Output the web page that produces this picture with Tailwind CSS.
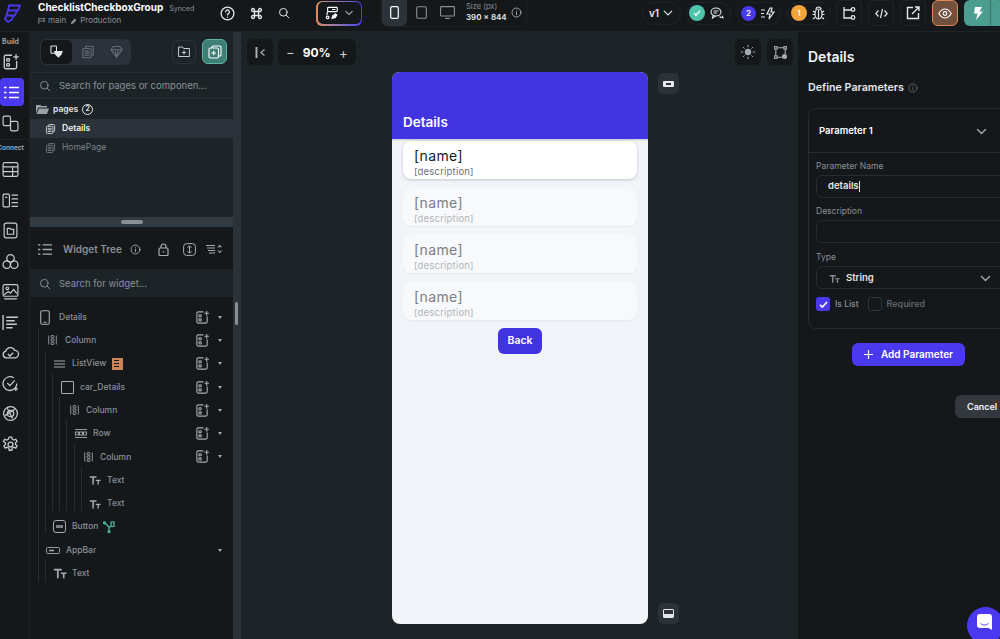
<!DOCTYPE html>
<html lang="en">
<head>
  <meta charset="UTF-8">
  <title>FlutterFlow - Details</title>
  <script src="https://cdn.jsdelivr.net/npm/@tailwindcss/browser@4"></script>
</head>
<body class="bg-[#14181b]">
<svg class="hidden" width="0" height="0">
  <symbol id="add" viewBox="0 0 16 16" fill="none" stroke="currentColor" stroke-width="1.2"><path d="M9 2H3.500A1.500 1.500 0 0 0 2 3.500v9A1.500 1.500 0 0 0 3.500 14h8a1.500 1.500 0 0 0 1.500-1.500V7"/><rect x="4.200" y="5" width="2.400" height="2.200" rx=".6"/><rect x="4.200" y="9.500" width="2.400" height="2.200" rx=".6"/><path d="M12.500 1v5M10 3.500h5"/></symbol>
  <symbol id="col" viewBox="0 0 16 16" fill="none" stroke="currentColor" stroke-width="1.2"><path d="M2.500 1.500v13M13.500 1.500v13"/><rect x="6" y="1.500" width="4" height="3.400" rx=".8"/><rect x="6" y="6.300" width="4" height="3.400" rx=".8"/><rect x="6" y="11.100" width="4" height="3.400" rx=".8"/></symbol>
  <symbol id="tt" viewBox="0 0 16 16" fill="currentColor"><path d="M1 3h9v2H6.500v9h-2V5H1zM9 7.500h6.500v1.700h-2.300V14h-1.900V9.200H9z"/></symbol>
  <symbol id="page" viewBox="0 0 16 16" fill="none" stroke="currentColor" stroke-width="1.200"><rect x="2" y="4" width="9.500" height="10.500" rx="1.500"/><path d="M5 4V2.800A1.300 1.300 0 0 1 6.300 1.500h6.200A1.500 1.500 0 0 1 14 3v7.500a1.300 1.300 0 0 1-1.300 1.300h-1.200M4 7h5.500M4 9.300h5.500M4 11.600h5.500"/></symbol>
  <symbol id="chev" viewBox="0 0 16 16" fill="none" stroke="currentColor" stroke-width="1.600" stroke-linecap="round" stroke-linejoin="round"><path d="M3 5.500l5 5 5-5"/></symbol>
  <symbol id="search" viewBox="0 0 16 16" fill="none" stroke="currentColor" stroke-width="1.300" stroke-linecap="round"><circle cx="7" cy="7" r="5"/><path d="M10.800 10.800L14.500 14.500"/></symbol>
  <symbol id="info" viewBox="0 0 16 16" fill="none" stroke="currentColor" stroke-width="1.300" stroke-linecap="round"><circle cx="8" cy="8" r="6.500"/><path d="M8 7.300V11.300M8 4.700v.2"/></symbol>
</svg>

<div class="w-[1000px] h-[639px] overflow-hidden relative flex flex-col text-[#e5e7eb] [font-family:Inter,'Liberation_Sans',sans-serif]">

  <!-- top bar -->
  <header class="h-[32px] shrink-0 flex items-center bg-[#14181b] border-b border-[#1d2428] pb-[5px]">
    <div class="w-[30px] shrink-0 pl-[3px]">
      <svg class="w-[18px] h-[19px] text-[#4b39ef]" viewBox="0 0 18 19" fill="none" stroke="currentColor" stroke-width="1.800" stroke-linejoin="round"><path d="M6 1.500h11l-2 5H5zM5 6.500h9l-2 5H3.500zM3.500 11.500L2 15l3 3 4-2.500 1.500-4"/></svg>
    </div>
    <div class="w-[8px] shrink-0"></div>
    <div class="w-[170px] shrink-0 mt-[1px]">
      <div class="flex items-baseline gap-[6px]"><span class="text-[10px] font-bold text-white leading-[13px]">ChecklistCheckboxGroup</span><span class="text-[7px] text-[#8a9097]">Synced</span></div>
      <div class="flex items-center gap-[2px] text-[8px] text-[#8a9097] leading-[11px] mt-[1px]">
        <svg class="w-[8px] h-[8px]" viewBox="0 0 10 10" fill="none" stroke="currentColor"><path d="M1 1v8M1 5h5M1 2h5"/><circle cx="7.500" cy="2" r="1"/><circle cx="7.500" cy="5" r="1"/></svg>
        <span>main</span>
        <svg class="w-[8px] h-[8px] ml-[2px]" viewBox="0 0 10 10" fill="currentColor"><path d="M1 9l1-3 4-4 2 2-4 4z"/></svg>
        <span>Production</span>
      </div>
    </div>
    <div class="flex shrink-0 items-center gap-[15px] w-[105px] pl-[12px]">
      <svg class="w-[15px] h-[15px] text-[#e5e7eb]" viewBox="0 0 16 16" fill="none" stroke="currentColor" stroke-width="1.400" stroke-linecap="round"><circle cx="8" cy="8" r="6.800"/><path d="M6 6.200a2 2 0 1 1 3 1.800c-.7.4-1 .8-1 1.500M8 11.800v.2"/></svg>
      <svg class="w-[13px] h-[13px] text-[#e5e7eb]" viewBox="0 0 16 16" fill="none" stroke="currentColor" stroke-width="1.700"><path d="M5.500 5.500h5v5h-5zM5.500 5.500H3.800a1.800 1.800 0 1 1 1.700-1.700zM10.500 5.500V3.800a1.800 1.800 0 1 1 1.700 1.700zM10.500 10.500h1.700a1.800 1.800 0 1 1-1.700 1.700zM5.500 10.500v1.700a1.800 1.800 0 1 1-1.700-1.700z"/></svg>
      <svg class="w-[12px] h-[12px] text-[#e5e7eb]"><use href="#search"/></svg>
    </div>
    <div class="ml-[3px] shrink-0 w-[46px] h-[25px] rounded-[6px] p-[1.500px] bg-gradient-to-r from-[#e08a5b] to-[#4b39ef]">
      <div class="w-full h-full rounded-[5px] bg-[#14181b] flex items-center justify-center gap-[5px] text-white">
        <svg class="w-[14px] h-[14px]" viewBox="0 0 16 16" fill="none" stroke="currentColor" stroke-width="1.300"><rect x="3" y="1.500" width="11" height="5" rx="1"/><path d="M3 6.500l-1 4M8 4h4"/><circle cx="3" cy="13" r="1.500"/><path d="M8 14l1-3 3-2 1.500 1.500-2 3z" fill="currentColor"/></svg>
        <svg class="w-[10px] h-[10px]"><use href="#chev"/></svg>
      </div>
    </div>
    <div class="ml-[19px] shrink-0 h-[28px] -mt-[1px] w-[146px] flex items-center rounded-b-[8px] border-b border-x border-[#1d2428]">
      <div class="w-[25px] h-[27px] bg-[#2b323a] rounded-b-[6px] flex items-center justify-center">
        <svg class="w-[9px] h-[13px] text-white" viewBox="0 0 9 13" fill="none" stroke="currentColor" stroke-width="1.200"><rect x=".7" y=".7" width="7.600" height="11.600" rx="1.400"/></svg>
      </div>
      <svg class="w-[11px] h-[13px] ml-[9px] text-[#8a9097]" viewBox="0 0 11 13" fill="none" stroke="currentColor" stroke-width="1.100"><rect x=".7" y=".7" width="9.600" height="11.600" rx="1.400"/></svg>
      <svg class="w-[15px] h-[13px] ml-[13px] text-[#8a9097]" viewBox="0 0 15 13" fill="none" stroke="currentColor" stroke-width="1.100"><rect x=".6" y=".6" width="13.800" height="9.400" rx=".8"/><path d="M5 12.400h5"/></svg>
      <div class="ml-[11px] w-[44px]">
        <div class="text-[7.500px] leading-[9px] text-[#8a9097]">Size (px)</div>
        <div class="text-[8px] font-semibold leading-[12px] text-[#e5e7eb] whitespace-nowrap">390 × 844</div>
      </div>
      <svg class="w-[11px] h-[11px] ml-[1px] text-[#a5abb2]"><use href="#info"/></svg>
    </div>

    <div class="ml-[115px] shrink-0 flex items-center">
      <div class="w-[39px] h-[23px] rounded-full border border-[#1d2428] flex items-center justify-center gap-[3px] text-[10px] font-semibold text-[#e5e7eb]">v1<svg class="w-[12px] h-[12px]"><use href="#chev"/></svg></div>
      <div class="ml-[5px] w-[45px] h-[23px] rounded-full border border-[#1d2428] flex items-center gap-[5px] pl-[2px]">
        <span class="w-[16px] h-[16px] rounded-full bg-[#4fc4ac] flex items-center justify-center"><svg class="w-[10px] h-[10px] text-white" viewBox="0 0 10 10" fill="none" stroke="currentColor" stroke-width="1.300"><path d="M2 5.200l2 2 4-4.400"/></svg></span>
        <svg class="w-[14px] h-[13px] text-[#e5e7eb]" viewBox="0 0 14 13" fill="none" stroke="currentColor" stroke-width="1.100"><ellipse cx="6" cy="5" rx="5" ry="4"/><path d="M3 8.500L2.500 11 5.500 9M9.500 9.800c1 .6 2 .6 3.500.9l-.7-2M3.500 4h5M3.500 6h3.500"/></svg>
      </div>
      <div class="ml-[6px] w-[44px] h-[23px] rounded-full border border-[#1d2428] flex items-center gap-[4px] pl-[3px]">
        <span class="w-[15px] h-[15px] rounded-full bg-[#4b39ef] text-[8px] font-semibold text-white flex items-center justify-center">2</span>
        <svg class="w-[15px] h-[13px] text-[#e5e7eb]" viewBox="0 0 15 13" fill="none" stroke="currentColor" stroke-width="1.200"><path d="M1 3h4M1 6.500h3M1 10h4M10 1L7 7h3l-1 5 5-7h-3l1-4z"/></svg>
      </div>
      <div class="ml-[6px] w-[44px] h-[23px] rounded-full border border-[#1d2428] flex items-center gap-[5px] pl-[3px]">
        <span class="w-[16px] h-[16px] rounded-full bg-[#f1a33c] text-[8px] font-semibold text-white flex items-center justify-center">1</span>
        <svg class="w-[13px] h-[14px] text-[#e5e7eb]" viewBox="0 0 13 14" fill="none" stroke="currentColor" stroke-width="1.200"><ellipse cx="6.500" cy="8" rx="3.500" ry="5"/><path d="M4 3.500a2.500 2.500 0 0 1 5 0M6.500 4v9M1 5l2 1.500M12 5l-2 1.500M.5 8.500H3M12.500 8.500H10M1 13l2-1.500M12 13l-2-1.500"/></svg>
      </div>
      <div class="ml-[5px] w-[26px] h-[26px] rounded-[6px] border border-[#1d2428] flex items-center justify-center">
        <svg class="w-[14px] h-[14px] text-[#e5e7eb]" viewBox="0 0 14 14" fill="none" stroke="currentColor" stroke-width="1.300"><path d="M2 1v11h7M2 4h7"/><circle cx="11" cy="3.500" r="1.800"/><circle cx="11" cy="11.500" r="1.800"/></svg>
      </div>
      <div class="ml-[6px] w-[26px] h-[26px] rounded-[6px] border border-[#1d2428] flex items-center justify-center">
        <svg class="w-[13px] h-[11px] text-[#e5e7eb]" viewBox="0 0 13 11" fill="none" stroke="currentColor" stroke-width="1.200"><path d="M3.500 2.500L.8 5.500l2.700 3M9.500 2.500l2.700 3-2.700 3M7.500 1L5.500 10"/></svg>
      </div>
      <div class="ml-[6px] w-[26px] h-[26px] rounded-[6px] border border-[#1d2428] flex items-center justify-center">
        <svg class="w-[14px] h-[14px] text-[#e5e7eb]" viewBox="0 0 14 14" fill="none" stroke="currentColor" stroke-width="1.400"><path d="M7 1.500H1.500v11h11V7M6 8l7-7M9 1h4v4"/></svg>
      </div>
      <div class="ml-[6px] w-[26px] h-[26px] rounded-[6px] border border-[#e08a5b] bg-[#71503c] flex items-center justify-center">
        <svg class="w-[14px] h-[11px] text-white" viewBox="0 0 14 11" fill="none" stroke="currentColor" stroke-width="1.200"><path d="M.8 5.500C3 1.800 5 1 7 1s4 .8 6.200 4.500C11 9.200 9 10 7 10S3 9.200.8 5.500z"/><circle cx="7" cy="5.500" r="1.800"/></svg>
      </div>
      <div class="ml-[6px] w-[40px] h-[26px] rounded-[6px] bg-[#4b9e8f] flex items-center pl-[9px]">
        <svg class="w-[10px] h-[13px] text-white" viewBox="0 0 10 13" fill="currentColor"><path d="M2 0h7L6.500 4.500H10L3 13l1.500-6.500H1z"/></svg>
        <i class="block w-px h-[26px] bg-[#14181b]/30 ml-[7px]"></i>
      </div>
    </div>
  </header>

  <div class="flex-1 flex min-h-0">
    <!-- icon rail -->
    <nav class="w-[30px] shrink-0 bg-[#14181b] border-r border-[#1d2428] flex flex-col items-center text-[#c8ccd1] pr-[8px]">
      <div class="text-[7px] font-semibold text-[#a5abb2] leading-[9px] mt-[5px]">Build</div>
      <svg class="w-[18px] h-[18px] mt-[7px]"><use href="#add"/></svg>
      <div class="w-[24px] h-[28px] bg-[#4b39ef] rounded-[4px] mt-[7px] ml-[2px] flex items-center justify-center text-white">
        <svg class="w-[15px] h-[13px]" viewBox="0 0 15 13" fill="none" stroke="currentColor" stroke-width="1.600"><path d="M5 1.500h10M5 6.500h10M5 11.500h10M0 1.500h2.500M0 6.500h2.500M0 11.500h2.500"/></svg>
      </div>
      <svg class="w-[17px] h-[17px] mt-[9px]" viewBox="0 0 16 16" fill="none" stroke="currentColor" stroke-width="1.100"><rect x="1" y="1" width="7" height="9" rx="1.500"/><rect x="8" y="6" width="7" height="9" rx="1.500"/></svg>
      <div class="w-[30px] h-px bg-[#1d2428] mt-[7px] ml-[8px]"></div>
      <div class="text-[6.500px] font-semibold text-[#a5abb2] leading-[9px] mt-[4px] whitespace-nowrap">Connect</div>
      <div class="flex flex-col items-center gap-[13.500px] mt-[8px]">
        <svg class="w-[17px] h-[17px]" viewBox="0 0 16 16" fill="none" stroke="currentColor" stroke-width="1.100"><rect x="1" y="1.500" width="14" height="13" rx="1.500"/><path d="M1 5.500h14M1 10h14M10 5.500V14.500"/></svg>
        <svg class="w-[17px] h-[17px]" viewBox="0 0 16 16" fill="none" stroke="currentColor" stroke-width="1.100"><rect x="1" y="2" width="6" height="12" rx="1"/><path d="M9 3h6M9 6.500h6M9 10h6M9 13.500h6M3 5h2"/></svg>
        <svg class="w-[17px] h-[17px]" viewBox="0 0 16 16" fill="none" stroke="currentColor" stroke-width="1.100"><rect x="2" y="1" width="12" height="14" rx="2"/><path d="M5 6h2.500l1 1H11v4.500H5z"/></svg>
        <svg class="w-[17px] h-[17px]" viewBox="0 0 16 16" fill="none" stroke="currentColor" stroke-width="1.200"><circle cx="8" cy="5" r="3.500"/><circle cx="4.500" cy="11" r="3.500"/><circle cx="11.500" cy="11" r="3.500"/></svg>
        <svg class="w-[17px] h-[17px]" viewBox="0 0 16 16" fill="none" stroke="currentColor" stroke-width="1.100"><rect x="1" y="1.500" width="14" height="11" rx="1.500"/><circle cx="5" cy="5" r="1.200"/><path d="M2 11l4-3 2 1.500L11 6l3 4M2 15h12"/></svg>
        <svg class="w-[17px] h-[17px]" viewBox="0 0 16 16" fill="none" stroke="currentColor" stroke-width="1.300"><path d="M1 1v14M4 3h11M4 6.300h8M4 9.600h10M4 13h6"/></svg>
        <svg class="w-[17px] h-[17px]" viewBox="0 0 16 16" fill="none" stroke="currentColor" stroke-width="1.200"><path d="M4 13a3.200 3.200 0 0 1-.4-6.300A4.500 4.500 0 0 1 12 6a3.500 3.500 0 0 1 0 7zM5.500 9.500l2 1.800 3-3"/></svg>
        <svg class="w-[17px] h-[17px]" viewBox="0 0 16 16" fill="none" stroke="currentColor" stroke-width="1.200"><path d="M14 8a6.500 6.500 0 1 1-3-5.400M5 7.500l2.500 2.500L12 5M13 11v4M11 13h4"/></svg>
        <svg class="w-[17px] h-[17px]" viewBox="0 0 16 16" fill="none" stroke="currentColor" stroke-width="1.200"><circle cx="8" cy="8" r="6.500"/><circle cx="8" cy="8" r="3"/><path d="M5 3l5 10M3 10l9-6"/></svg>
        <svg class="w-[17px] h-[17px]" viewBox="0 0 16 16" fill="none" stroke="currentColor" stroke-width="1.200"><circle cx="8" cy="8" r="2.300"/><path d="M6.800 1h2.400l.4 2 1.500.8 1.900-.8 1.200 2.100-1.500 1.300v1.600l1.500 1.300-1.200 2.100-1.900-.8-1.500.8-.4 2H6.800l-.4-2-1.500-.8-1.900.8-1.200-2.100 1.500-1.300V6.400L1.300 5.100l1.200-2.100 1.900.8 1.500-.8z"/></svg>
      </div>
    </nav>

    <!-- left panel -->
    <aside class="w-[203px] shrink-0 flex flex-col bg-[#1d2428]">
      <div class="h-[41px] shrink-0 flex items-center pl-[10px] pb-[1px] border-b border-[#252c32]">
        <div class="w-[91px] h-[26px] rounded-[6px] bg-[#2b323a] flex items-center">
          <div class="w-[31px] h-[24px] ml-[1px] rounded-[5px] bg-[#14181b] flex items-center justify-center">
            <svg class="w-[13px] h-[13px] text-[#e5e7eb]" viewBox="0 0 14 14" fill="none" stroke="currentColor" stroke-width="1.100"><rect x="1" y="1" width="6" height="8" rx="1"/><path d="M5 7h8l-1 3-3 3-3-3z" fill="currentColor"/></svg>
          </div>
          <svg class="w-[14px] h-[14px] ml-[9px] text-[#666d75]"><use href="#page"/></svg>
          <svg class="w-[13px] h-[13px] ml-[15px] text-[#666d75]" viewBox="0 0 14 14" fill="none" stroke="currentColor" stroke-width="1.100"><path d="M3.500 1.500h7L13 5l-6 8-6-8zM1 5h12M5 5l2 8 2-8"/></svg>
        </div>
        <div class="ml-[41px] w-[24px] h-[24px] rounded-[6px] border border-[#2b323a] flex items-center justify-center">
          <svg class="w-[12px] h-[11px] text-[#c8ccd1]" viewBox="0 0 12 11" fill="none" stroke="currentColor" stroke-width="1"><path d="M.6 1h4l1 1.500h5.800v8H.6zM6 4.500v4M4 6.500h4"/></svg>
        </div>
        <div class="ml-[6px] w-[25px] h-[25px] rounded-[6px] border border-[#5cb5a5] bg-[#3d7f75] flex items-center justify-center">
          <svg class="w-[14px] h-[14px] text-white" viewBox="0 0 14 14" fill="none" stroke="currentColor" stroke-width="1.100"><rect x="1" y="3" width="9.500" height="10" rx="1.500"/><path d="M4 3V2a1 1 0 0 1 1-1h7a1 1 0 0 1 1 1v8a1 1 0 0 1-1 1h-1.500M5.700 5.700v4.600M3.400 8h4.600"/></svg>
        </div>
      </div>
      <div class="h-[26px] shrink-0 flex items-center pl-[9px] pt-[1px] gap-[8px] border-b border-[#252c32]">
        <svg class="w-[12px] h-[12px] text-[#8a9097]"><use href="#search"/></svg>
        <span class="text-[9.500px] text-[#8a9097]">Search for pages or componen...</span>
      </div>
      <div class="h-[20px] shrink-0 flex items-center pl-[6px] gap-[4px]">
        <svg class="w-[13px] h-[10px] text-[#9aa0a6]" viewBox="0 0 13 10" fill="currentColor"><path d="M0 1h4.500l1 1H11v1.500H2.500L0 9zM3 4.500h10L11 10H.5z"/></svg>
        <span class="text-[8.500px] font-semibold text-[#e5e7eb]">pages</span>
        <span class="w-[11px] h-[11px] rounded-full border border-[#e5e7eb] text-[7px] font-semibold flex items-center justify-center">2</span>
      </div>
      <div class="h-[19px] shrink-0 flex items-center pl-[15px] gap-[6px] bg-[#2b323a]">
        <svg class="w-[11px] h-[12px] text-[#e5e7eb]"><use href="#page"/></svg>
        <span class="text-[8.500px] font-semibold text-[#f1f4f8]">Details</span>
      </div>
      <div class="h-[19px] shrink-0 flex items-center pl-[15px] gap-[6px]">
        <svg class="w-[11px] h-[12px] text-[#7c828a]"><use href="#page"/></svg>
        <span class="text-[8.500px] text-[#7c828a]">HomePage</span>
      </div>
      <div class="flex-1"></div>
      <div class="h-[10px] shrink-0 bg-[#323a42] flex items-center justify-center">
        <div class="w-[22px] h-[4px] rounded-full bg-[#8a9097]"></div>
      </div>

      <div class="h-[42px] shrink-0 flex items-center bg-[#14181b] pl-[8px] pt-[2px] text-[#a5abb2]">
        <svg class="w-[14px] h-[13px]" viewBox="0 0 15 13" fill="none" stroke="currentColor" stroke-width="1.500"><path d="M5 1.500h10M5 6.500h10M5 11.500h10M0 1.500h2.500M0 6.500h2.500M0 11.500h2.500"/></svg>
        <span class="ml-[11px] text-[10px] font-semibold text-[#8a9097]">Widget Tree</span>
        <svg class="ml-[8px] w-[11px] h-[11px]"><use href="#info"/></svg>
        <svg class="ml-[17px] w-[11px] h-[13px]" viewBox="0 0 11 13" fill="none" stroke="currentColor" stroke-width="1.200"><rect x="1" y="5" width="9" height="7.500" rx="1"/><path d="M3 5V3.500a2.500 2.500 0 0 1 5 0V5M5.500 8v1.500"/></svg>
        <svg class="ml-[14px] w-[13px] h-[13px]" viewBox="0 0 13 13" fill="none" stroke="currentColor" stroke-width="1"><rect x=".6" y=".6" width="11.800" height="11.800" rx="3"/><path d="M6.500 3v7M4.500 4.800l2-2 2 2M4.500 8.200l2 2 2-2"/></svg>
        <svg class="ml-[10px] w-[16px] h-[10px]" viewBox="0 0 16 10" fill="none" stroke="currentColor" stroke-width="1.100"><path d="M0 1.500h9M1 4h8M2 6.500h7M3 9h6M12 3.500l1.700-2 1.700 2M12 6.500l1.700 2 1.700-2"/></svg>
      </div>
      <div class="h-[28px] shrink-0 flex items-center pl-[9px] pt-[2px] gap-[8px] bg-[#1d2428]">
        <svg class="w-[12px] h-[12px] text-[#8a9097]"><use href="#search"/></svg>
        <span class="text-[9.500px] text-[#8a9097]">Search for widget...</span>
      </div>

      <!-- widget tree -->
      <div class="h-[342px] shrink-0 bg-[#14181b] relative pt-[8.500px] text-[#8a9097] text-[8.500px] font-medium">
        <div class="absolute left-[8px] top-[31px] h-[254px] w-px bg-[#252c32]"></div>
        <div class="absolute left-[15px] top-[54px] h-[182px] w-px bg-[#252c32]"></div>
        <div class="absolute left-[22px] top-[77px] h-[137px] w-px bg-[#252c32]"></div>
        <div class="absolute left-[29px] top-[101px] h-[113px] w-px bg-[#252c32]"></div>
        <div class="absolute left-[36px] top-[124px] h-[90px] w-px bg-[#252c32]"></div>
        <div class="absolute left-[44px] top-[147px] h-[67px] w-px bg-[#252c32]"></div>
        <div class="absolute left-[51px] top-[170px] h-[44px] w-px bg-[#252c32]"></div>
        <div class="absolute left-[15px] top-[263px] h-[22px] w-px bg-[#252c32]"></div>

        <div class="h-[23.300px] flex items-center pl-[10px]">
          <svg class="w-[10px] h-[15px] text-[#a5abb2]" viewBox="0 0 10 15" fill="none" stroke="currentColor" stroke-width="1.100"><rect x=".7" y=".7" width="8.600" height="13.600" rx="1.500"/><path d="M3.500 12.300h3"/></svg>
          <span class="ml-[9px]">Details</span>
          <span class="ml-auto flex items-center gap-[8px] pr-[11px] text-[#a5abb2]"><svg class="w-[15px] h-[15px]"><use href="#add"/></svg><span class="w-0 h-0 border-x-[2.500px] border-x-transparent border-t-[3px] border-t-[#a5abb2]"></span></span>
        </div>
        <div class="h-[23.300px] flex items-center pl-[17px]">
          <svg class="w-[11px] h-[14px] text-[#a5abb2]"><use href="#col"/></svg>
          <span class="ml-[7px]">Column</span>
          <span class="ml-auto flex items-center gap-[8px] pr-[11px] text-[#a5abb2]"><svg class="w-[15px] h-[15px]"><use href="#add"/></svg><span class="w-0 h-0 border-x-[2.500px] border-x-transparent border-t-[3px] border-t-[#a5abb2]"></span></span>
        </div>
        <div class="h-[23.300px] flex items-center pl-[24px]">
          <svg class="w-[11px] h-[8px] text-[#a5abb2]" viewBox="0 0 11 8" fill="none" stroke="currentColor" stroke-width="1"><path d="M0 1h11M0 4h11M0 7h11"/></svg>
          <span class="ml-[7px]">ListView</span>
          <span class="ml-[6px] w-[11px] h-[12px] bg-[#c9845e] flex flex-col justify-center gap-[1.500px] pl-[1.500px] pr-[4px]"><i class="block h-[1.500px] bg-[#14181b]"></i><i class="block h-[1.500px] bg-[#14181b]"></i><i class="block h-[1.500px] bg-[#14181b]"></i></span>
          <span class="ml-auto flex items-center gap-[8px] pr-[11px] text-[#a5abb2]"><svg class="w-[15px] h-[15px]"><use href="#add"/></svg><span class="w-0 h-0 border-x-[2.500px] border-x-transparent border-t-[3px] border-t-[#a5abb2]"></span></span>
        </div>
        <div class="h-[23.300px] flex items-center pl-[31px]">
          <span class="w-[13px] h-[13px] border border-[#a5abb2] rounded-[1px]"></span>
          <span class="ml-[6px]">car_Details</span>
          <span class="ml-auto flex items-center gap-[8px] pr-[11px] text-[#a5abb2]"><svg class="w-[15px] h-[15px]"><use href="#add"/></svg><span class="w-0 h-0 border-x-[2.500px] border-x-transparent border-t-[3px] border-t-[#a5abb2]"></span></span>
        </div>
        <div class="h-[23.300px] flex items-center pl-[39px]">
          <svg class="w-[11px] h-[14px] text-[#a5abb2]"><use href="#col"/></svg>
          <span class="ml-[6px]">Column</span>
          <span class="ml-auto flex items-center gap-[8px] pr-[11px] text-[#a5abb2]"><svg class="w-[15px] h-[15px]"><use href="#add"/></svg><span class="w-0 h-0 border-x-[2.500px] border-x-transparent border-t-[3px] border-t-[#a5abb2]"></span></span>
        </div>
        <div class="h-[23.300px] flex items-center pl-[45px]">
          <svg class="w-[12px] h-[9px] text-[#a5abb2]" viewBox="0 0 12 9" fill="none" stroke="currentColor" stroke-width=".9"><path d="M0 .5h12M0 8.500h12"/><rect x=".5" y="3" width="3" height="3"/><rect x="4.500" y="3" width="3" height="3"/><rect x="8.500" y="3" width="3" height="3"/></svg>
          <span class="ml-[6px]">Row</span>
          <span class="ml-auto flex items-center gap-[8px] pr-[11px] text-[#a5abb2]"><svg class="w-[15px] h-[15px]"><use href="#add"/></svg><span class="w-0 h-0 border-x-[2.500px] border-x-transparent border-t-[3px] border-t-[#a5abb2]"></span></span>
        </div>
        <div class="h-[23.300px] flex items-center pl-[53px]">
          <svg class="w-[11px] h-[14px] text-[#a5abb2]"><use href="#col"/></svg>
          <span class="ml-[6px]">Column</span>
          <span class="ml-auto flex items-center gap-[8px] pr-[11px] text-[#a5abb2]"><svg class="w-[15px] h-[15px]"><use href="#add"/></svg><span class="w-0 h-0 border-x-[2.500px] border-x-transparent border-t-[3px] border-t-[#a5abb2]"></span></span>
        </div>
        <div class="h-[23.300px] flex items-center pl-[59px]">
          <svg class="w-[12px] h-[12px] text-[#a5abb2]"><use href="#tt"/></svg>
          <span class="ml-[6px]">Text</span>
        </div>
        <div class="h-[23.300px] flex items-center pl-[59px]">
          <svg class="w-[12px] h-[12px] text-[#a5abb2]"><use href="#tt"/></svg>
          <span class="ml-[6px]">Text</span>
        </div>
        <div class="h-[23.300px] flex items-center pl-[23px]">
          <span class="w-[13px] h-[13px] border border-[#a5abb2] rounded-[3px] flex items-center justify-center"><i class="block w-[7px] h-[3px] bg-[#a5abb2]/70"></i></span>
          <span class="ml-[6px]">Button</span>
          <svg class="ml-[5px] w-[12px] h-[12px] text-[#4fc4ac]" viewBox="0 0 12 12" fill="none" stroke="currentColor" stroke-width="1.200"><circle cx="1.500" cy="1.800" r="1"/><circle cx="6" cy="10.500" r="1"/><path d="M2.500 2.500L6 6v3.500M8 1v4.500H11V1zM6 6h2"/></svg>
        </div>
        <div class="h-[23.300px] flex items-center pl-[16px]">
          <svg class="w-[14px] h-[7px] text-[#a5abb2]" viewBox="0 0 14 7" fill="none" stroke="currentColor" stroke-width=".9"><rect x=".5" y=".5" width="13" height="6" rx="1"/><path d="M3 3.500h5" stroke-width="1.500"/></svg>
          <span class="ml-[6px]">AppBar</span>
          <span class="ml-auto pr-[11px]"><span class="block w-0 h-0 border-x-[2.500px] border-x-transparent border-t-[3px] border-t-[#a5abb2]"></span></span>
        </div>
        <div class="h-[23.300px] flex items-center pl-[23px]">
          <svg class="w-[14px] h-[14px] text-[#a5abb2]"><use href="#tt"/></svg>
          <span class="ml-[5px]">Text</span>
        </div>
      </div>
    </aside>

    <!-- scrollbar between panel and canvas -->
    <div class="w-[8px] shrink-0 bg-[#2b323a] flex flex-col">
      <div class="h-[23px] mt-[270px] mx-[2px] w-[3px] rounded-full bg-[#8a9097]"></div>
    </div>

    <!-- canvas -->
    <main class="w-[557px] shrink-0 bg-[#1d2428] relative">
      <div class="absolute left-[6px] top-[7px] w-[26px] h-[26px] rounded-[6px] bg-[#14181b] flex items-center justify-center text-[#a5abb2]">
        <svg class="w-[11px] h-[11px]" viewBox="0 0 11 11" fill="none" stroke="currentColor" stroke-width="1.300"><path d="M1.500 0v11" stroke-width="2"/><path d="M9.500 2.500L6 5.500l3.500 3"/></svg>
      </div>
      <div class="absolute left-[37px] top-[7px] w-[78px] h-[26px] rounded-[6px] bg-[#14181b] flex items-center justify-between px-[8px] pt-[1px] text-[#c8ccd1]">
        <span class="text-[13px] leading-none">−</span>
        <span class="text-[12px] font-bold text-white">90%</span>
        <span class="text-[14px] leading-none">+</span>
      </div>
      <div class="absolute left-[494px] top-[7px] w-[26px] h-[26px] rounded-[6px] bg-[#14181b] flex items-center justify-center text-[#a5abb2]">
        <svg class="w-[14px] h-[14px]" viewBox="0 0 14 14" fill="currentColor"><circle cx="7" cy="7" r="3.200"/><path d="M7 0v2.200M7 11.800V14M0 7h2.200M11.800 7H14M2 2l1.500 1.500M10.500 10.500L12 12M2 12l1.500-1.500M10.500 3.500L12 2" stroke="currentColor" stroke-width="1"/></svg>
      </div>
      <div class="absolute left-[526px] top-[7px] w-[26px] h-[26px] rounded-[6px] bg-[#14181b] flex items-center justify-center text-[#a5abb2]">
        <svg class="w-[13px] h-[13px]" viewBox="0 0 13 13" fill="none" stroke="currentColor" stroke-width="1.100"><rect x=".6" y=".6" width="2.500" height="2.500"/><rect x="9.900" y=".6" width="2.500" height="2.500"/><rect x=".6" y="9.900" width="2.500" height="2.500"/><circle cx="10.500" cy="10.500" r="2" fill="currentColor"/><path d="M3 1.800h7M1.800 3v7M11.200 3v5M3 11.200h5"/></svg>
      </div>
      <div class="absolute left-[417px] top-[41px] w-[21px] h-[21px] rounded-[5px] bg-[#2b323a] flex items-center justify-center">
        <span class="w-[11px] h-[6px] rounded-[1px] bg-[#e5e7eb] flex items-center justify-center"><i class="block w-[5px] h-[2px] bg-[#2b323a]"></i></span>
      </div>
      <div class="absolute left-[417px] top-[571px] w-[21px] h-[21px] rounded-[5px] bg-[#2b323a] flex items-center justify-center">
        <span class="w-[11px] h-[9px] border border-[#e5e7eb] rounded-[1px] flex items-end"><i class="block w-full h-[3px] bg-[#e5e7eb]"></i></span>
      </div>

      <!-- phone -->
      <div class="absolute left-[151px] top-[40px] w-[256px] h-[552px] rounded-[8px] bg-[#f1f4f8] overflow-hidden">
        <div class="h-[67px] bg-[#4134e0] flex items-end pl-[11px] pb-[7px] shadow-[0_1px_2px_rgba(0,0,0,0.2)]">
          <span class="text-[13.500px] font-semibold leading-[20px] text-white">Details</span>
        </div>
        <div class="px-[11px] pt-[2px] flex flex-col gap-[9px]">
          <div class="h-[38px] rounded-[8px] bg-white shadow-[0_1px_3px_rgba(0,0,0,0.2)] pl-[11px] pt-[5px]">
            <div class="text-[14px] leading-[20px] tracking-[0.4px] text-[#14181b]">[name]</div>
            <div class="text-[9.500px] leading-[11px] tracking-[0.2px] text-[#6b7178]">[description]</div>
          </div>
          <div class="h-[38px] rounded-[8px] bg-[#f8f9fb] shadow-[0_1px_2px_rgba(0,0,0,0.06)] pl-[11px] pt-[5px]">
            <div class="text-[14px] leading-[20px] tracking-[0.4px] text-[#7a7f85]">[name]</div>
            <div class="text-[9.500px] leading-[11px] tracking-[0.2px] text-[#b0b4ba]">[description]</div>
          </div>
          <div class="h-[38px] rounded-[8px] bg-[#f8f9fb] shadow-[0_1px_2px_rgba(0,0,0,0.06)] pl-[11px] pt-[5px]">
            <div class="text-[14px] leading-[20px] tracking-[0.4px] text-[#7a7f85]">[name]</div>
            <div class="text-[9.500px] leading-[11px] tracking-[0.2px] text-[#b0b4ba]">[description]</div>
          </div>
          <div class="h-[38px] rounded-[8px] bg-[#f8f9fb] shadow-[0_1px_2px_rgba(0,0,0,0.06)] pl-[11px] pt-[5px]">
            <div class="text-[14px] leading-[20px] tracking-[0.4px] text-[#7a7f85]">[name]</div>
            <div class="text-[9.500px] leading-[11px] tracking-[0.2px] text-[#b0b4ba]">[description]</div>
          </div>
        </div>
        <div class="flex justify-center mt-[8px]">
          <button class="w-[44px] h-[26px] rounded-[6px] bg-[#4134e0] text-[10.500px] font-semibold text-white">Back</button>
        </div>
      </div>
    </main>

    <!-- right panel -->
    <aside class="flex-1 bg-[#14181b] pl-[10px] overflow-hidden">
      <div class="text-[14px] font-semibold leading-[20px] text-[#f1f4f8] mt-[15px]">Details</div>
      <div class="flex items-center gap-[4px] mt-[11px] h-[20px]">
        <span class="text-[10.700px] font-semibold text-[#e5e7eb]">Define Parameters</span>
        <svg class="w-[10px] h-[10px] text-[#666d75]"><use href="#info"/></svg>
      </div>
      <div class="w-[220px] h-[221px] mt-[10px] rounded-[8px] border border-[#252c32] text-[#8a9097]">
        <div class="h-[44px] flex items-center pl-[10px] pt-[1px] border-b border-[#252c32]">
          <span class="text-[9.500px] font-semibold text-white">Parameter 1</span>
          <svg class="ml-[102px] w-[13px] h-[13px] text-[#a5abb2]"><use href="#chev"/></svg>
        </div>
        <div class="pl-[7px]">
          <div class="text-[8.500px] leading-[12px] mt-[7px]">Parameter Name</div>
          <div class="h-[23px] mt-[3px] rounded-[6px] border border-[#252c32] flex items-center pl-[11px]">
            <span class="text-[9.500px] font-semibold text-[#e5e7eb]">details</span><i class="block w-px h-[11px] bg-[#e5e7eb]"></i>
          </div>
          <div class="text-[8.500px] leading-[12px] mt-[7px]">Description</div>
          <div class="h-[23px] mt-[3px] rounded-[6px] border border-[#252c32]"></div>
          <div class="text-[8.500px] leading-[12px] mt-[8px]">Type</div>
          <div class="h-[23px] mt-[3px] rounded-[6px] border border-[#252c32] flex items-center pl-[12px] pt-[1px]">
            <svg class="w-[11px] h-[11px] text-[#8a9097]"><use href="#tt"/></svg>
            <span class="ml-[6px] text-[9.500px] font-semibold text-[#e5e7eb]">String</span>
            <svg class="ml-[105px] w-[13px] h-[13px] text-[#a5abb2]"><use href="#chev"/></svg>
          </div>
          <div class="flex items-center mt-[8px] text-[8.500px] font-medium">
            <span class="w-[14px] h-[14px] rounded-[3px] bg-[#4b39ef] flex items-center justify-center">
              <svg class="w-[11px] h-[11px] text-white" viewBox="0 0 11 11" fill="none" stroke="currentColor" stroke-width="1.600"><path d="M2 5.700l2.300 2.300L9 3"/></svg>
            </span>
            <span class="ml-[5px]">Is List</span>
            <span class="ml-[9px] w-[14px] h-[14px] rounded-[3px] border border-[#2b323a]"></span>
            <span class="ml-[5px] text-[9px] text-[#666d75]">Required</span>
          </div>
        </div>
      </div>
      <div class="w-[113px] h-[23px] ml-[44px] mt-[14px] rounded-[6px] bg-[#4b39ef] flex items-center justify-center gap-[8px] text-white">
        <svg class="w-[9px] h-[9px]" viewBox="0 0 9 9" fill="none" stroke="currentColor" stroke-width="1.200"><path d="M4.500 0v9M0 4.500h9"/></svg>
        <span class="text-[10px] font-semibold">Add Parameter</span>
      </div>
      <div class="w-[60px] h-[23px] ml-[147px] mt-[29px] rounded-[6px] bg-[#32383e] flex items-center pl-[12px]">
        <span class="text-[9px] font-semibold text-[#f1f4f8]">Cancel</span>
      </div>
    </aside>
  </div>

  <!-- chat bubble -->
  <div class="absolute left-[967px] top-[607px] w-[37px] h-[37px] rounded-full bg-[#4b39ef] flex items-start pl-[10px] pt-[7px]">
    <svg class="w-[15px] h-[16px]" viewBox="0 0 15 16"><path d="M3 0h9a3 3 0 0 1 3 3v13l-3.500-2H3a3 3 0 0 1-3-3V3a3 3 0 0 1 3-3z" fill="#fff"/><path d="M3.500 9.500c2.500 2 5.500 2 8 0" fill="none" stroke="#4b39ef" stroke-width="1"/></svg>
  </div>
</div>
</body>
</html>
